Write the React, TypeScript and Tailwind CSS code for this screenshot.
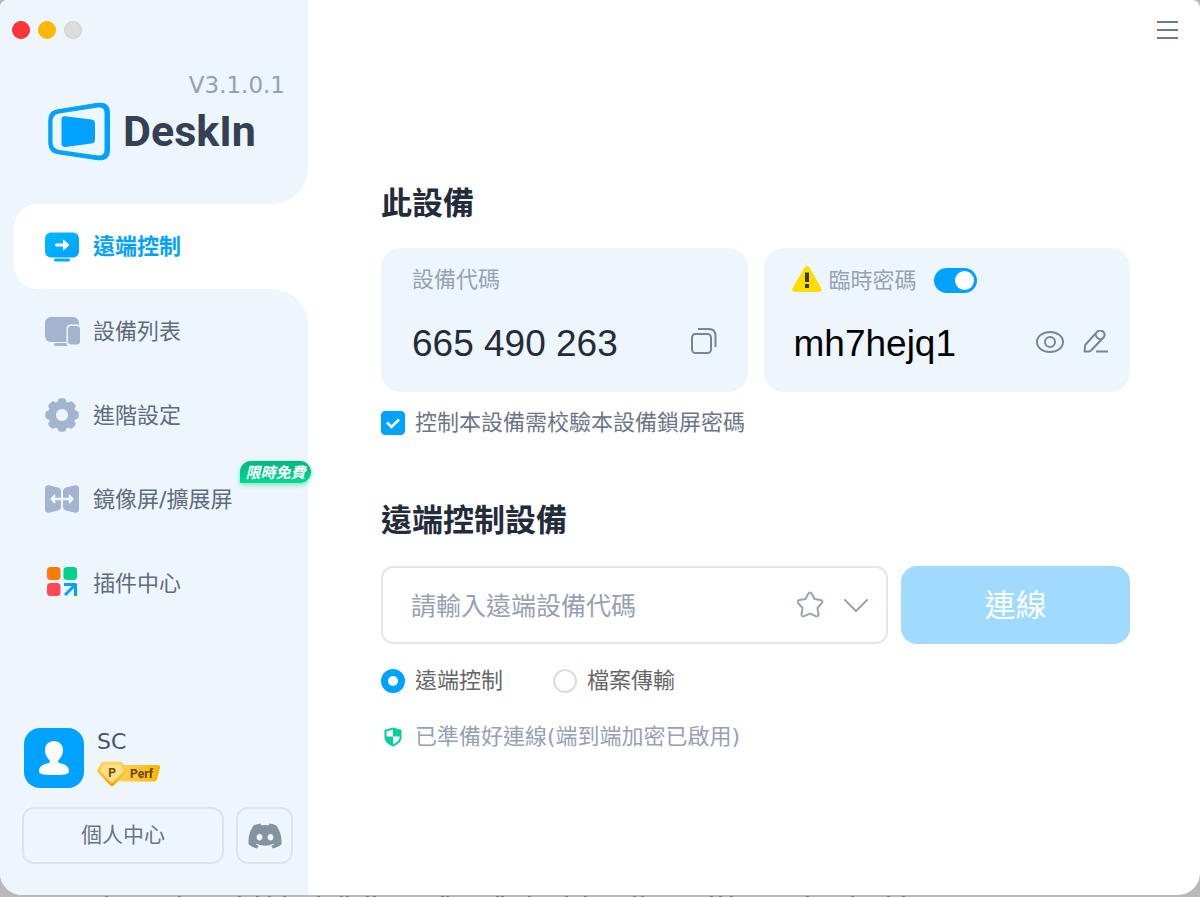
import React from 'react';
import { FaDiscord } from 'react-icons/fa';

interface NavItem {
  label: string;
  icon: React.ReactNode;
  badge?: string;
}

function Logo() {
  return (
    <svg width="62" height="59" viewBox="0 0 62 59" fill="none" aria-hidden="true">
      <path
        d="M8.500 8 L50 1.200 Q61.500 0 61.500 10.500 V48.500 Q61.500 59 50 57.800 L8.500 51.500 Q0.800 50 0.800 41 V18 Q0.800 9.500 8.500 8 Z"
        fill="#00a2ff"
        stroke="#00a2ff"
        strokeLinejoin="round"
      />
      <path
        d="M11 11.500 L50 5.600 Q56.500 5 56.500 11 V48 Q56.500 54 50 53.500 L11 48 Q4.500 46.500 4.500 40.500 V19 Q4.500 13 11 11.500 Z"
        fill="#eef6fd"
      />
      <path d="M17 14.300 L43.500 17.500 Q47 18 47 21.500 V37.500 Q47 41 43.500 41.500 L17.500 45 Q13.500 45.300 13.500 41.500 V17.500 Q13.500 14 17 14.300 Z" fill="#00a2ff" />
    </svg>
  );
}

function RemoteIcon() {
  return (
    <svg width="34" height="34" viewBox="0 0 34 34" fill="none" aria-hidden="true">
      <defs>
        <linearGradient id="remote" x1="0" y1="0" x2="1" y2="1">
          <stop offset="0" stopColor="#00bbff" />
          <stop offset="1" stopColor="#00a0ff" />
        </linearGradient>
      </defs>
      <rect y="2.500" width="34" height="25" rx="6" fill="url(#remote)" />
      <rect x="9" y="28.500" width="16" height="3" rx="1.500" fill="#00a9ff" />
      <path d="M11.500 15 H20" stroke="#fff" strokeWidth="3" strokeLinecap="round" />
      <path d="M18.500 10 L24 15 L18.500 20 Z" fill="#fff" stroke="#fff" strokeWidth="1" strokeLinejoin="round" />
    </svg>
  );
}

function DevicesIcon() {
  return (
    <svg width="36" height="34" viewBox="0 0 36 34" aria-hidden="true">
      <rect y="3" width="34" height="25" rx="6" fill="#a3b4d1" />
      <rect x="9" y="29" width="14" height="3" rx="1.500" fill="#a3b4d1" />
      <rect x="21.500" y="10.500" width="15" height="22" rx="4" fill="#eef6fd" />
      <rect x="23" y="12" width="12" height="18.500" rx="3" fill="#a3b4d1" />
    </svg>
  );
}

function GearIcon() {
  const teeth = [0, 45, 90, 135, 180, 225, 270, 315];
  return (
    <svg width="34" height="34" viewBox="0 0 34 34" fill="#a3b4d1" aria-hidden="true">
      <circle cx="17" cy="17" r="14" />
      {teeth.map((deg) => (
        <rect key={deg} x="12.800" y="0.300" width="8.400" height="8" rx="3" transform={`rotate(${deg} 17 17)`} />
      ))}
      <circle cx="17" cy="17" r="6" fill="#eef6fd" />
    </svg>
  );
}

function MirrorIcon() {
  return (
    <svg width="34" height="34" viewBox="0 0 34 34" fill="none" aria-hidden="true">
      <path d="M4 3.200 L13 5.500 Q16 6.500 16 9 V25 Q16 27.500 13 28.500 L4 30.800 Q0 31 0 27.500 V6.500 Q0 3 4 3.200 Z" fill="#a3b4d1" />
      <path d="M30 3.200 L21 5.500 Q18 6.500 18 9 V25 Q18 27.500 21 28.500 L30 30.800 Q34 31 34 27.500 V6.500 Q34 3 30 3.200 Z" fill="#a3b4d1" />
      <path d="M9 17 H25" stroke="#eef6fd" strokeWidth="2.500" />
      <path d="M9.500 13.300 L6 17 L9.500 20.700 Z M24.500 13.300 L28 17 L24.500 20.700 Z" fill="#eef6fd" stroke="#eef6fd" strokeWidth="1.500" strokeLinejoin="round" />
    </svg>
  );
}

function PluginIcon() {
  return (
    <svg width="34" height="34" viewBox="0 0 34 34" fill="none" aria-hidden="true">
      <rect x="2" y="1" width="13.500" height="13" rx="3.500" fill="#ff7a00" />
      <rect x="18.500" y="1" width="13.500" height="13" rx="3.500" fill="#00d28c" />
      <rect x="2" y="17" width="13.500" height="13" rx="3.500" fill="#ff4757" />
      <path d="M19 18.500 H30.500 V30 M29.500 19.500 L20 29" stroke="#00a2ff" strokeWidth="3" strokeLinejoin="round" />
    </svg>
  );
}

function PerfBadge() {
  return (
    <svg width="64" height="26" viewBox="0 0 64 26" role="img" aria-label="Perf">
      <defs>
        <linearGradient id="gold" x1="0" y1="0" x2="1" y2="0">
          <stop offset="0" stopColor="#ffd560" />
          <stop offset="1" stopColor="#f8b500" />
        </linearGradient>
        <linearGradient id="gem" x1="0" y1="0" x2="0" y2="1">
          <stop offset="0" stopColor="#ffd766" />
          <stop offset="1" stopColor="#f0aa08" />
        </linearGradient>
      </defs>
      <path d="M20 4 H61 Q63.500 4 63 6.500 L60 18.500 Q59.300 20.500 57 20.500 H20 Z" fill="url(#gold)" />
      <path d="M6.500 0.500 H23.500 Q25 0.500 26 2 L29.500 8.500 Q30.300 10 29 11.500 L17 24.500 Q15 26 13 24.500 L1 11.500 Q-0.300 10 0.500 8.500 L4 2 Q5 0.500 6.500 0.500 Z" fill="url(#gem)" />
      <path d="M7 3.500 H23 L27 10 L15 22 L3 10 Z" fill="#ffe08a" />
      <text x="15" y="16" textAnchor="middle" fontFamily="Roboto, sans-serif" fontSize="12" fontWeight="700" fill="#7a4a00">P</text>
      <text x="33" y="17" fontFamily="Roboto, sans-serif" fontSize="12" fontWeight="700" fill="#6b4200">Perf</text>
    </svg>
  );
}

const navItems: NavItem[] = [
  { label: '設備列表', icon: <DevicesIcon /> },
  { label: '進階設定', icon: <GearIcon /> },
  { label: '鏡像屏/擴展屏', icon: <MirrorIcon />, badge: '限時免費' },
  { label: '插件中心', icon: <PluginIcon /> },
];

// Specks of the document lying behind the window
const specks = [105, 178, 238, 256, 268, 283, 317, 340, 346, 366, 373, 441, 446, 496, 501, 528, 565, 584, 633, 641, 710, 719, 730, 806, 851, 887, 902];

function Sidebar() {
  return (
    <aside className="w-[308px] shrink-0 flex flex-col bg-[#eef6fd]">
      <div className="bg-white">
        <div className="bg-[#eef6fd] rounded-br-[36px] pt-[21px] pb-[43px]">
          <div className="flex gap-2 pl-3">
            <button aria-label="關閉" className="size-[18px] rounded-full bg-[#ff3438] border border-[#fb2a30]" />
            <button aria-label="最小化" className="size-[18px] rounded-full bg-[#ffb900] border border-[#fbb400]" />
            <button aria-label="縮放" className="size-[18px] rounded-full bg-[#dcdcdc] border border-[#cfcfcf]" />
          </div>
          <p className="mt-8 pr-[23px] text-right text-[23px] leading-7 text-[#959fb5]">V3.1.0.1</p>
          <div className="mt-[3px] pl-12 flex items-center gap-[13px]">
            <Logo />
            <span className="font-['Roboto',sans-serif] font-bold text-[43px] leading-[59px] text-[#344054]">DeskIn</span>
          </div>
        </div>
      </div>

      <nav>
        <div className="pl-3.5">
          <a href="#remote" aria-current="page" className="h-[85px] pl-[31px] flex items-center gap-3.5 rounded-l-3xl bg-white font-bold text-[#00a2ff]">
            <RemoteIcon />
            遠端控制
          </a>
        </div>
        <div className="bg-white">
          <div className="bg-[#eef6fd] rounded-tr-[36px]">
            {navItems.map((item) => (
              <a key={item.label} href="#" className="relative h-[84px] pl-[45px] flex items-center gap-3.5 text-[#5f6b7e]">
                <span className="w-[34px]">{item.icon}</span>
                {item.label}
                {item.badge && (
                  <span className="absolute top-1 -right-[3px] h-[22px] w-[71px] rounded-[11px] rounded-bl-none bg-linear-to-b from-[#00b87c] to-[#00d890] shadow-[0_2px_5px_#00d89080] text-center font-['Noto_Sans_CJK_TC',sans-serif] text-[15px] leading-[22px] font-bold italic text-white">
                    {item.badge}
                  </span>
                )}
              </a>
            ))}
          </div>
        </div>
      </nav>

      <div className="mt-auto pt-8 pl-[22px] pr-[15px] pb-[31px]">
        <div className="flex gap-[13px] pl-0.5">
          <div className="size-[60px] rounded-2xl bg-[#00a2ff] flex items-center justify-center">
            <svg width="32" height="34" viewBox="0 0 32 34" fill="#fff" aria-hidden="true">
              <path d="M16 0 C21 0 25 3.500 25 9 C25 14 22.500 17 20 20 Q20 22 23 22.500 C28 23.500 31 26 31 30 C31 33 28 34 16 34 C4 34 1 33 1 30 C1 26 4 23.500 9 22.500 Q12 22 12 20 C9.500 17 7 14 7 9 C7 3.500 11 0 16 0 Z" />
            </svg>
          </div>
          <div>
            <p className="leading-7 text-[#46546e]">SC</p>
            <div className="mt-[5px]"><PerfBadge /></div>
          </div>
        </div>
        <div className="mt-[19px] flex gap-3">
          <button className="flex-1 h-[57px] rounded-xl border-2 border-[#dfe3e8] text-[21px] text-[#687587]">個人中心</button>
          <button aria-label="Discord" className="size-[57px] rounded-xl border-2 border-[#dfe3e8] flex items-center justify-center text-[#8593a1]">
            <FaDiscord size={36} />
          </button>
        </div>
      </div>
    </aside>
  );
}

export default function App() {
  return (
    <div className="min-h-screen flex flex-col bg-[#b9b9b9] font-['DejaVu_Sans','Noto_Sans_CJK_TC',sans-serif] text-[22px]">
      <div className="flex-1 flex bg-white rounded-t-[8px] rounded-b-[22px] overflow-hidden">
        <Sidebar />

        <main className="flex-1 min-w-0">
          <div className="h-[60px] pr-[21px] flex items-center justify-end">
            <button aria-label="選單">
              <svg width="24" height="24" viewBox="0 0 24 24" stroke="#6b7a90" strokeWidth="2" aria-hidden="true">
                <path d="M2 4 H23 M2 12 H23 M2 20 H23" />
              </svg>
            </button>
          </div>

          <div className="pt-[123px] pl-[73px] pr-[70px]">
            <h2 className="mb-[25px] text-[31px] leading-10 font-bold text-[#242c3b]">此設備</h2>
            <div className="grid grid-cols-2 gap-4">
              <section className="h-36 rounded-[20px] bg-[#eef6fd] pt-4 pl-[31px] pr-[31px]">
                <p className="leading-8 text-[#97a1b5]">設備代碼</p>
                <div className="mt-6 flex items-center justify-between">
                  <span className="font-['Liberation_Sans',sans-serif] text-[37px] leading-12 text-[#242c3b]">665 490 263</span>
                  <button aria-label="複製">
                    <svg width="26" height="32" viewBox="0 0 26 32" fill="none" stroke="#77849a" strokeWidth="2" aria-hidden="true">
                      <rect x="1" y="6" width="19" height="19" rx="3.500" />
                      <path d="M7 1 H18 Q24.500 1 24.500 8 V19" />
                    </svg>
                  </button>
                </div>
              </section>

              <section className="h-36 rounded-[20px] bg-[#eef6fd] pt-4 pl-7 pr-[21px]">
                <div className="h-8 flex items-center">
                  <svg width="30" height="30" viewBox="0 0 30 30" aria-hidden="true">
                    <path d="M12.500 2.500 Q15 -1 17.500 2.500 L29 22.500 Q31 27 27 27 H3 Q-1 27 1 22.500 Z" fill="#ffdd00" />
                    <path d="M15 7.500 V17" stroke="#333a45" strokeWidth="4" />
                    <rect x="13" y="19" width="4" height="4" fill="#333a45" />
                  </svg>
                  <label htmlFor="temp-password" className="ml-[7px] text-[#97a1b5]">臨時密碼</label>
                  <input
                    id="temp-password"
                    type="checkbox"
                    role="switch"
                    defaultChecked
                    className="ml-[17px] appearance-none flex items-center w-[43px] h-[25px] p-[3px] rounded-full bg-[#c8d0dc] checked:bg-[#00a2ff] checked:justify-end before:size-[19px] before:rounded-full before:bg-white"
                  />
                </div>
                <div className="mt-6 flex items-center">
                  <span className="pl-0.5 flex-1 font-['Liberation_Sans',sans-serif] text-[37px] leading-12 text-black">mh7hejq1</span>
                  <button aria-label="顯示密碼" className="mr-[19px]">
                    <svg width="28" height="28" viewBox="0 0 28 28" fill="none" stroke="#77849a" strokeWidth="2" aria-hidden="true">
                      <path d="M1 12 C1 6 7 2 14 2 C21 2 27 6 27 12 C27 18 21 22 14 22 C7 22 1 18 1 12 Z" />
                      <circle cx="14" cy="12" r="5" />
                    </svg>
                  </button>
                  <button aria-label="編輯">
                    <svg width="26" height="28" viewBox="0 0 26 28" fill="none" stroke="#77849a" strokeWidth="2" strokeLinejoin="round" aria-hidden="true">
                      <path d="M14 2 Q17 -1 20 1.500 Q23 4.500 20.500 7.500 L8 20.500 Q7 21.500 5.500 21.500 L1.500 21.500 L2 16.500 Q2 15 3 14 Z" />
                      <path d="M12.500 4 Q13 8.500 18 9.500" />
                      <path d="M13 21.500 H25" />
                    </svg>
                  </button>
                </div>
              </section>
            </div>

            <label className="mt-[15px] flex items-center gap-2.5 leading-8 text-[#6c7687]">
              <span className="grid">
                <input type="checkbox" defaultChecked className="peer appearance-none col-start-1 row-start-1 size-6 rounded-[4px] border border-[#c8d0dc] checked:border-[#00a2ff] checked:bg-[#00a2ff]" />
                <svg className="col-start-1 row-start-1 hidden peer-checked:block pointer-events-none" width="24" height="24" viewBox="0 0 24 24" fill="none" stroke="#fff" strokeWidth="2.500" aria-hidden="true">
                  <path d="M6 11.500 L10.500 16 L18 8.500" />
                </svg>
              </span>
              控制本設備需校驗本設備鎖屏密碼
            </label>

            <h2 className="mt-[61px] mb-[26px] text-[31px] leading-10 font-bold text-[#242c3b]">遠端控制設備</h2>
            <form onSubmit={(e) => e.preventDefault()}>
              <div className="flex gap-[13px]">
                <div className="flex-1 min-w-0 h-[78px] px-[18px] flex items-center border-2 border-[#e5e6e8] rounded-xl">
                  <input
                    type="text"
                    aria-label="遠端設備代碼"
                    placeholder="請輸入遠端設備代碼"
                    className="flex-1 min-w-0 pl-2.5 font-['Noto_Sans_CJK_TC',sans-serif] text-[25px] outline-none placeholder:text-[#97a1b5]"
                  />
                  <button type="button" aria-label="收藏" className="mr-[19px]">
                    <svg width="28" height="28" viewBox="0 0 28 28" fill="none" stroke="#9aa3b1" strokeWidth="2" strokeLinejoin="round" aria-hidden="true">
                      <path d="M11.200 2.800 Q13 0 14.800 2.800 L17.500 8 L23.500 9 Q26.500 10 24.500 12.500 L20.500 17 L21.500 23 Q21.700 26 18.800 25.200 L13 22.600 L7.200 25.200 Q4.300 26 4.500 23 L5.500 17 L1.500 12.500 Q-0.500 10 2.500 9 L8.500 8 Z" />
                    </svg>
                  </button>
                  <button type="button" aria-label="展開列表">
                    <svg width="24" height="24" viewBox="0 0 24 24" fill="none" stroke="#9aa3b1" strokeWidth="2" strokeLinecap="round" strokeLinejoin="round" aria-hidden="true">
                      <path d="M1 7 L12 18 L23 7" />
                    </svg>
                  </button>
                </div>
                <button className="w-[229px] h-[78px] rounded-2xl bg-[#a0daff] text-[31px] text-white">連線</button>
              </div>

              <div className="mt-[21px] flex gap-[50px] leading-8 text-[#666666]">
                <label className="flex items-center gap-2.5">
                  <input type="radio" name="mode" defaultChecked className="appearance-none size-6 rounded-full bg-white border-2 border-[#dcdde0] checked:border-[7px] checked:border-[#00a2ff]" />
                  遠端控制
                </label>
                <label className="flex items-center gap-2.5">
                  <input type="radio" name="mode" className="appearance-none size-6 rounded-full bg-white border-2 border-[#dcdde0] checked:border-[7px] checked:border-[#00a2ff]" />
                  檔案傳輸
                </label>
              </div>
            </form>

            <p className="mt-6 flex items-center gap-2.5 leading-8 text-[#97a1b5]">
              <svg width="24" height="24" viewBox="0 0 24 24" aria-hidden="true">
                <path d="M12 2.500 L20.500 5 V12 C20.500 16.500 17 19.500 12 21.500 C7 19.500 3.500 16.500 3.500 12 V5 Z" fill="#00d09c" />
                <path d="M12 4.500 V11.500 H5.500 V6.500 Z M12 11.500 H18.700 C18.500 15.500 16 17.700 12 19.500 Z" fill="#fff" />
              </svg>
              已準備好連線(端到端加密已啟用)
            </p>
          </div>
        </main>
      </div>

      <svg className="h-0.5 w-full shrink-0" aria-hidden="true">
        {specks.map((x) => (
          <rect key={x} x={x} y="1" width="3" height="1" fill="#7a7a7a" />
        ))}
      </svg>
    </div>
  );
}
